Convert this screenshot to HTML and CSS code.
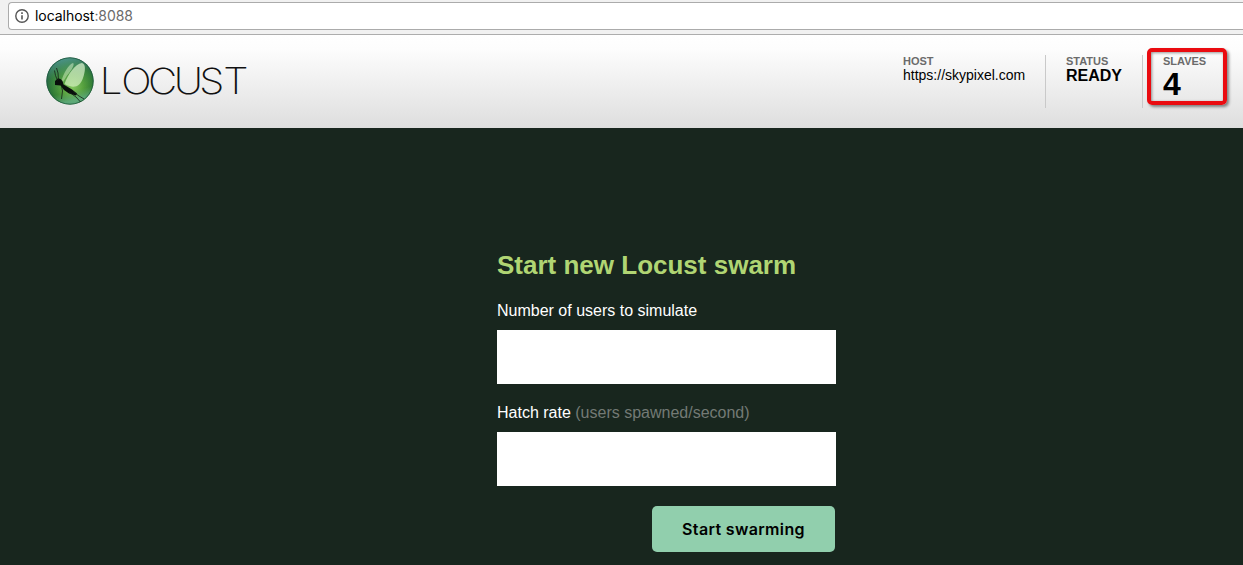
FILE: index.html
```html
<!DOCTYPE html>
<html lang="en">
<head>
<meta charset="utf-8">
<title>Locust</title>
<link rel="stylesheet" href="styles.css">
</head>
<body>
<div class="browser-bar">
  <div class="address">
    <svg class="info" width="14" height="14" viewBox="0 0 14 14"><circle cx="7" cy="7" r="6.2" fill="none" stroke="#555" stroke-width="1.4"/><path d="M7 6.2v4.3M7 3.3v1.6" stroke="#555" stroke-width="1.6"/></svg>
    <span class="url">localhost<span class="port">:8088</span></span>
  </div>
</div>
<header class="top">
  <svg class="logo" width="204" height="50" viewBox="0 0 204 50" role="img" aria-label="Locust">
    <defs>
      <radialGradient id="globe" cx="55%" cy="62%" r="58%">
        <stop offset="0" stop-color="#86c860"/><stop offset=".4" stop-color="#55a03c"/><stop offset=".78" stop-color="#2c7733"/><stop offset="1" stop-color="#1b583c"/>
      </radialGradient>
      <linearGradient id="shine" x1="0" y1="0" x2="0.25" y2="1">
        <stop offset="0" stop-color="#5aabae" stop-opacity=".9"/><stop offset=".45" stop-color="#68ae83" stop-opacity=".15"/><stop offset=".8" stop-color="#68ae83" stop-opacity="0"/><stop offset="1" stop-color="#6cb9a0" stop-opacity=".6"/>
      </linearGradient>
      <linearGradient id="wing" x1=".8" y1="0" x2=".2" y2="1">
        <stop offset="0" stop-color="#d5edcb" stop-opacity=".75"/><stop offset="1" stop-color="#d3f0bd" stop-opacity=".7"/>
      </linearGradient>
    </defs>
    <circle cx="24" cy="25" r="23.6" fill="url(#globe)"/>
    <circle cx="24" cy="25" r="23.2" fill="url(#shine)" stroke="#205b40" stroke-width=".8"/>
    <path d="M15.500 25.500C17 18 23 8 27 7C29 8 26 14 21 19.500L17 26Z" fill="url(#wing)" opacity=".7"/>
    <path d="M18.500 28C22 18 29 8 36 7C40 8 39.500 15 37 22C34 31 28 33 18.500 28Z" fill="url(#wing)"/>
    <path d="M9 25L12 22.300L14.500 23L16.500 25L17.500 28.500L21 30.500L26 33.500L31 37.500L30 39.500L23 37.500L18 34L14.500 29.500L9 29Z" fill="#090f0b"/>
    <g fill="none" stroke="#142117" stroke-width=".8" stroke-linejoin="round"><path d="M11.500 24.500L9.500 19.500L8.500 14.500M12.500 24L12 17L10.500 12M15.500 30L16.500 35L15.500 43M23 36L30 41L34.500 46M27 35.500L33 40L38 43"/></g>
    <text class="wordmark" transform="scale(1.12 1)" y="38.200" x="48 67.100 91.100 114.100 136.800 158.200">LOCUST</text>
  </svg>
  <div class="boxes">
    <div class="box box-host"><div class="label">HOST</div><div class="host">https://skypixel.com</div></div>
    <div class="box box-status"><div class="label">STATUS</div><div class="status">READY</div></div>
    <div class="box box-slaves"><div class="label">SLAVES</div><div class="count">4</div><div class="highlight"></div></div>
  </div>
</header>
<main class="start">
  <form class="form">
    <h2 class="title">Start new Locust swarm</h2>
    <label class="field-label" for="users">Number of users to simulate</label>
    <input class="field" id="users" type="text">
    <label class="field-label" for="rate">Hatch rate <span class="hint">(users spawned/second)</span></label>
    <input class="field" id="rate" type="text">
    <button class="submit" type="button">Start swarming</button>
  </form>
</main>
</body>
</html>
```
FILE: styles.css
```css
* { box-sizing: border-box; }
body {
  margin: 0;
  height: 565px;
  overflow: hidden;
  background: #18261e;
  font-family: "Liberation Sans", Arial, sans-serif;
}
.browser-bar {
  height: 35px;
  padding: 2px 0 0 8px;
  background: #f1f1f1;
  border-bottom: 1px solid #adadad;
}
.address {
  display: flex;
  align-items: center;
  gap: 6px;
  height: 28px;
  padding-left: 6px;
  background: #fff;
  border: 1px solid #ababab;
  border-right: 0;
  border-radius: 4px 0 0 4px;
}
.url { font: 14px/20px Inter, sans-serif; color: #000; letter-spacing: -0.05px; }
.port { color: #6b6b6b; }
.top {
  display: flex;
  justify-content: space-between;
  height: 93px;
  padding: 20px 17px 0 46px;
  background: linear-gradient(#fff, #fdfdfd 15%, #dedede);
}
.logo { margin-top: 1px; }
.wordmark { font-family: Inter, sans-serif; font-weight: 250; font-size: 36px; fill: #111; }
.boxes { display: flex; height: 53px; }
.box { position: relative; padding: 0 20px; border-left: 1px solid #c9c9c9; }
.box-host { border-left: 0; width: 162px; }
.box-status { width: 97px; }
.box-slaves { width: 84px; }
.label { font-size: 11px; line-height: 13px; font-weight: bold; color: #6b6b6b; }
.host { font-size: 14px; line-height: 14px; color: #000; }
.status { font-size: 16px; line-height: 16px; font-weight: bold; }
.count { font-size: 32px; line-height: 33px; font-weight: bold; }
.highlight {
  position: absolute;
  left: 4px;
  top: -7px;
  width: 80px;
  height: 57px;
  border: 4px solid #ea0b10;
  border-radius: 5px;
  box-shadow: 2px 2px 3px rgba(0, 0, 0, .45), inset 1px 1px 3px rgba(0, 0, 0, .4);
}
.start { display: flex; padding: 122px 0 0 497px; }
.form { display: flex; flex-direction: column; width: 339px; }
.title { margin: 0 0 21px; font-size: 26px; line-height: 30px; color: #b0d573; white-space: nowrap; }
.field-label { font-size: 16px; line-height: 20px; margin-bottom: 9px; color: #fff; }
.hint { color: #737a75; }
.field { height: 54px; margin: 0 0 19px; padding: 0 10px; border: 0; background: #fff; font-size: 24px; }
.submit {
  align-self: flex-end;
  width: 183px;
  height: 46px;
  margin: 1px 1px 0 0;
  padding: 0;
  border: 0;
  border-radius: 5px;
  background: #91cfad;
  color: #000;
  font: 600 16px Inter, sans-serif;
  letter-spacing: .35px;
}
```
